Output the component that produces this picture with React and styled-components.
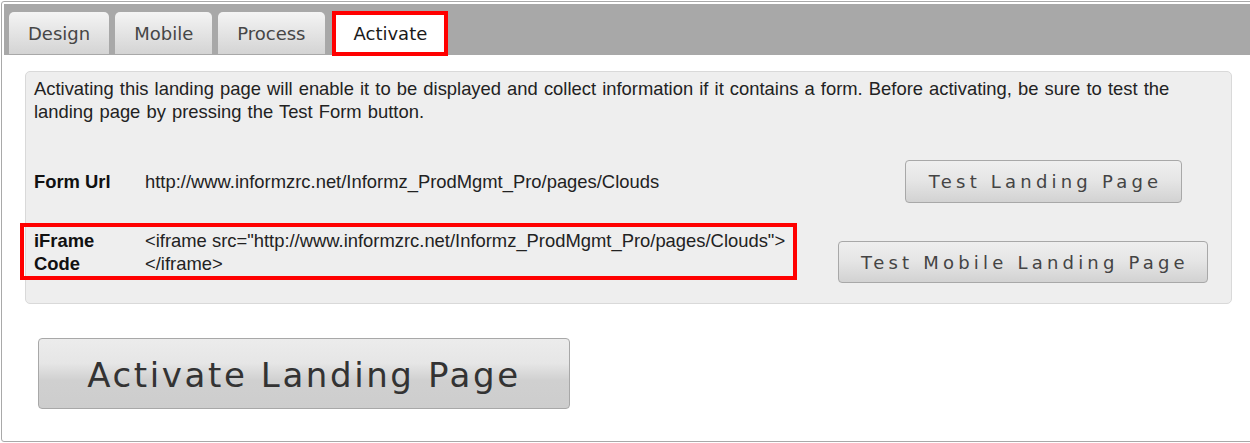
import React from 'react';
import styled, { createGlobalStyle } from 'styled-components';

const GlobalStyle = createGlobalStyle`
  html, body {
    margin: 0;
    padding: 0;
    background: #ffffff;
    overflow: hidden;
  }
  body {
    font-family: "Liberation Sans", Arial, sans-serif;
  }
`;

const tabs = ['Design', 'Mobile', 'Process', 'Activate'];

const App = () => {
  return (
    <>
      <GlobalStyle />
      <Frame>
        <TabBar>
          {tabs.map((t) => (
            <Tab key={t} $active={t === 'Activate'}>
              {t}
            </Tab>
          ))}
        </TabBar>

        <Content>
          <Panel>
            <Intro>
              Activating this landing page will enable it to be displayed and collect information if it contains a form. Before activating, be sure to test the
              <br />
              landing page by pressing the Test Form button.
            </Intro>

            <FormRow>
              <Label>Form Url</Label>
              <Value>http://www.informzrc.net/Informz_ProdMgmt_Pro/pages/Clouds</Value>
              <TestButton $width={277} $height={43} $right={49}>
                Test Landing Page
              </TestButton>
            </FormRow>

            <IframeRow>
              <IframeCell>
                <Label>
                  iFrame
                  <br />
                  Code
                </Label>
                <Value>
                  &lt;iframe src="http://www.informzrc.net/Informz_ProdMgmt_Pro/pages/Clouds"&gt;
                  <br />
                  &lt;/iframe&gt;
                </Value>
              </IframeCell>
              <TestButton $width={370} $height={42} $right={23} $top={14}>
                Test Mobile Landing Page
              </TestButton>
            </IframeRow>
          </Panel>

          <ActivateButton>Activate Landing Page</ActivateButton>
        </Content>
      </Frame>
    </>
  );
};

export default App;

const Frame = styled.div`
  box-sizing: border-box;
  margin: 1px 0 0 1px;
  width: 1262px;
  height: 441px;
  border: 1px solid #a9a9a9;
  border-radius: 3px;
  padding: 2px;
  background: #ffffff;
`;

const TabBar = styled.div`
  display: flex;
  align-items: flex-end;
  gap: 6px;
  height: 51px;
  padding: 0 0 0 5px;
  background: #a8a8a8;
`;

const Tab = styled.div`
  box-sizing: border-box;
  display: flex;
  align-items: center;
  justify-content: center;
  font-family: "DejaVu Sans", Verdana, sans-serif;
  font-size: 18px;
  height: ${(p) => (p.$active ? '45px' : '42px')};
  margin-bottom: ${(p) => (p.$active ? '-1px' : '1px')};
  margin-left: ${(p) => (p.$active ? '1px' : '0')};
  padding: ${(p) => (p.$active ? '0 17px 0 18px' : '0 19px')};
  border-radius: ${(p) => (p.$active ? '0' : '5px 5px 0 0')};
  color: ${(p) => (p.$active ? '#1a1a1a' : '#464646')};
  background: ${(p) =>
    p.$active ? '#ffffff' : 'linear-gradient(to bottom, #f4f4f4 0%, #e4e4e4 50%, #d4d4d4 100%)'};
  border: ${(p) => (p.$active ? '4px solid #ff0000' : 'none')};
`;

const Content = styled.div`
  padding: 16px 0 0 21px;
`;

const Panel = styled.div`
  box-sizing: border-box;
  width: 1207px;
  padding: 5px 0 20px 8px;
  background: #eeeeee;
  border: 1px solid #d9d9d9;
  border-radius: 5px;
  color: #222222;
  font-size: 18.4px;
`;

const Intro = styled.p`
  margin: 0;
  line-height: 23px;
  word-spacing: 1px;
`;

const FormRow = styled.div`
  display: flex;
  align-items: center;
  margin-top: 37px;
`;

const IframeRow = styled.div`
  display: flex;
  align-items: flex-start;
  margin-top: 24px;
`;

const IframeCell = styled.div`
  box-sizing: border-box;
  display: flex;
  align-items: center;
  width: 769px;
  height: 49px;
  margin-left: -10px;
  padding-left: 10px;
  outline: 4px solid #ff0000;
  line-height: 23px;
`;

const Label = styled.div`
  width: 111px;
  flex-shrink: 0;
  font-weight: bold;
  color: #111111;
  line-height: 23px;
`;

const Value = styled.div`
  flex: 1;
  white-space: nowrap;
  line-height: 23px;
  color: #222222;
`;

const TestButton = styled.button`
  box-sizing: border-box;
  flex-shrink: 0;
  margin-left: auto;
  margin-right: ${(p) => p.$right}px;
  margin-top: ${(p) => p.$top || 0}px;
  width: ${(p) => p.$width}px;
  height: ${(p) => p.$height}px;
  padding: 0 0 0 4px;
  border: 1px solid #a8a8a8;
  border-radius: 4px;
  background: linear-gradient(to bottom, #efefef 0%, #e6e6e6 45%, #d2d2d2 100%);
  font-family: "DejaVu Sans", Verdana, sans-serif;
  font-size: 18px;
  letter-spacing: 4.2px;
  color: #444444;
`;

const ActivateButton = styled.button`
  box-sizing: border-box;
  display: block;
  margin: 34px 0 0 13px;
  width: 532px;
  height: 71px;
  padding: 2px 0 0 0;
  border: 1px solid #a8a8a8;
  border-radius: 4px;
  background: linear-gradient(to bottom, #ececec 0%, #e6e6e6 35%, #d0d0d0 60%, #cdcdcd 100%);
  font-family: "DejaVu Sans", Verdana, sans-serif;
  font-size: 34px;
  letter-spacing: 2.6px;
  color: #333333;
`;
